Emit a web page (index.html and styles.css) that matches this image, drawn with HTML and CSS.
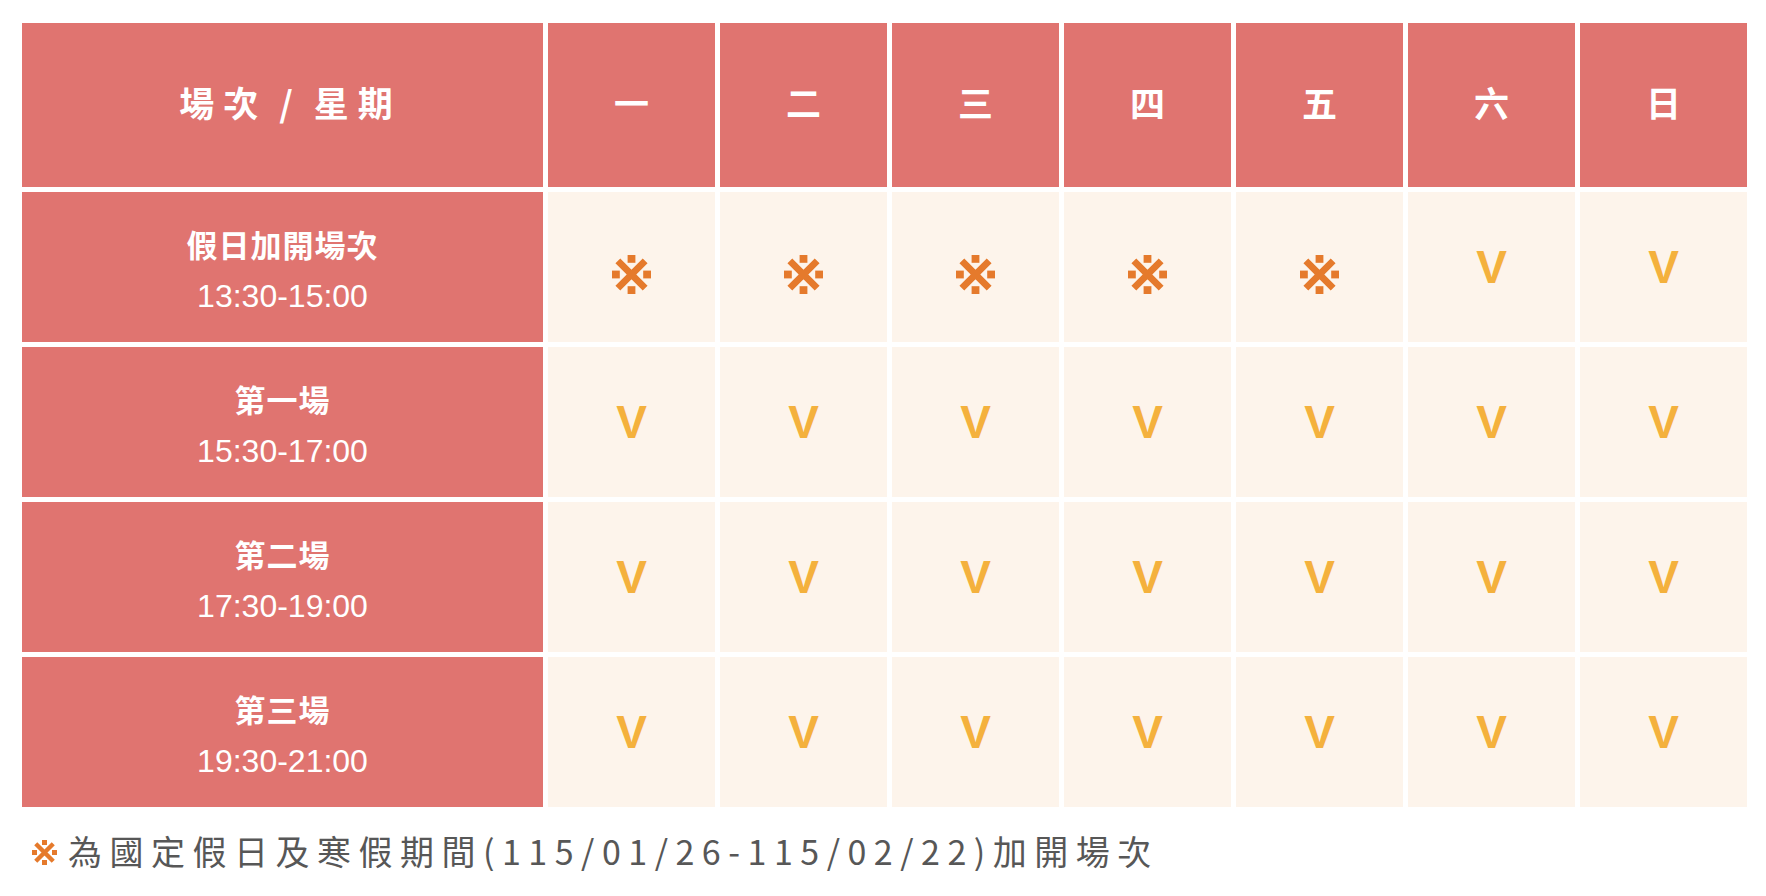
FILE: index.html
```html
<!DOCTYPE html>
<html lang="zh-Hant">
<head>
<meta charset="utf-8">
<title>場次表</title>
<link rel="stylesheet" href="styles.css">
</head>
<body>
<div class="wrap">
  <div class="grid">
    <div class="cell head top corner">場次 / 星期</div>
    <div class="cell head top day">一</div>
    <div class="cell head top day">二</div>
    <div class="cell head top day">三</div>
    <div class="cell head top day">四</div>
    <div class="cell head top day">五</div>
    <div class="cell head top day">六</div>
    <div class="cell head top day">日</div>

    <div class="cell head row"><span class="title">假日加開場次</span><span class="time">13:30-15:00</span></div>
    <div class="cell body"><svg class="mark" viewBox="0 0 40 40" aria-label="※"><rect x="16" y="0" width="8" height="8"/><rect x="16" y="32" width="8" height="8"/><rect x="0" y="16" width="8" height="8"/><rect x="32" y="16" width="8" height="8"/><path d="M6 6 L34 34 M34 6 L6 34"/></svg></div>
    <div class="cell body"><svg class="mark" viewBox="0 0 40 40" aria-label="※"><rect x="16" y="0" width="8" height="8"/><rect x="16" y="32" width="8" height="8"/><rect x="0" y="16" width="8" height="8"/><rect x="32" y="16" width="8" height="8"/><path d="M6 6 L34 34 M34 6 L6 34"/></svg></div>
    <div class="cell body"><svg class="mark" viewBox="0 0 40 40" aria-label="※"><rect x="16" y="0" width="8" height="8"/><rect x="16" y="32" width="8" height="8"/><rect x="0" y="16" width="8" height="8"/><rect x="32" y="16" width="8" height="8"/><path d="M6 6 L34 34 M34 6 L6 34"/></svg></div>
    <div class="cell body"><svg class="mark" viewBox="0 0 40 40" aria-label="※"><rect x="16" y="0" width="8" height="8"/><rect x="16" y="32" width="8" height="8"/><rect x="0" y="16" width="8" height="8"/><rect x="32" y="16" width="8" height="8"/><path d="M6 6 L34 34 M34 6 L6 34"/></svg></div>
    <div class="cell body"><svg class="mark" viewBox="0 0 40 40" aria-label="※"><rect x="16" y="0" width="8" height="8"/><rect x="16" y="32" width="8" height="8"/><rect x="0" y="16" width="8" height="8"/><rect x="32" y="16" width="8" height="8"/><path d="M6 6 L34 34 M34 6 L6 34"/></svg></div>
    <div class="cell body"><span class="v">V</span></div>
    <div class="cell body"><span class="v">V</span></div>

    <div class="cell head row"><span class="title">第一場</span><span class="time">15:30-17:00</span></div>
    <div class="cell body"><span class="v">V</span></div>
    <div class="cell body"><span class="v">V</span></div>
    <div class="cell body"><span class="v">V</span></div>
    <div class="cell body"><span class="v">V</span></div>
    <div class="cell body"><span class="v">V</span></div>
    <div class="cell body"><span class="v">V</span></div>
    <div class="cell body"><span class="v">V</span></div>

    <div class="cell head row"><span class="title">第二場</span><span class="time">17:30-19:00</span></div>
    <div class="cell body"><span class="v">V</span></div>
    <div class="cell body"><span class="v">V</span></div>
    <div class="cell body"><span class="v">V</span></div>
    <div class="cell body"><span class="v">V</span></div>
    <div class="cell body"><span class="v">V</span></div>
    <div class="cell body"><span class="v">V</span></div>
    <div class="cell body"><span class="v">V</span></div>

    <div class="cell head row"><span class="title">第三場</span><span class="time">19:30-21:00</span></div>
    <div class="cell body"><span class="v">V</span></div>
    <div class="cell body"><span class="v">V</span></div>
    <div class="cell body"><span class="v">V</span></div>
    <div class="cell body"><span class="v">V</span></div>
    <div class="cell body"><span class="v">V</span></div>
    <div class="cell body"><span class="v">V</span></div>
    <div class="cell body"><span class="v">V</span></div>
  </div>
  <p class="note"><svg class="note-mark" viewBox="0 0 40 40" aria-label="※"><rect x="16" y="0" width="8" height="8"/><rect x="16" y="32" width="8" height="8"/><rect x="0" y="16" width="8" height="8"/><rect x="32" y="16" width="8" height="8"/><path d="M6 6 L34 34 M34 6 L6 34"/></svg><span class="note-text">為國定假日及寒假期間(115/01/26-115/02/22)加開場次</span></p>
</div>
</body>
</html>
```
FILE: styles.css
```css
html, body {
  margin: 0;
  padding: 0;
  background: #ffffff;
}

body {
  font-family: "Noto Sans CJK TC", "Noto Sans", sans-serif;
}

.wrap {
  padding: 23px 20px 0 22px;
}

.grid {
  display: grid;
  grid-template-columns: 521px repeat(7, 167px);
  grid-template-rows: 164px repeat(4, 150px);
  gap: 5px;
}

.cell {
  display: flex;
  align-items: center;
  justify-content: center;
}

.head {
  background: #e07470;
  color: #ffffff;
}

.top {
  padding-bottom: 8px;
  box-sizing: border-box;
}

.body {
  background: #fdf4eb;
}

.corner,
.day {
  font-size: 35px;
  font-weight: 700;
  letter-spacing: 9px;
  text-indent: 9px;
}

.corner {
  word-spacing: -5px;
  text-indent: 16px;
}

.row {
  flex-direction: column;
  padding-top: 6px;
  box-sizing: border-box;
}

.title {
  font-size: 31px;
  font-weight: 700;
  line-height: 50px;
  letter-spacing: 1px;
}

.time {
  font-family: "Liberation Sans", Arial, sans-serif;
  font-size: 32px;
  line-height: 50px;
  margin-top: 2px;
}

.mark {
  width: 39px;
  height: 39px;
  margin-top: 15px;
  fill: #e57a2c;
  stroke: #e57a2c;
  stroke-width: 7;
}

.mark rect,
.note-mark rect {
  stroke: none;
}

.v {
  color: #f4b13d;
  font-family: "Liberation Sans", Arial, sans-serif;
  font-size: 46px;
  font-weight: 700;
  line-height: 1;
}

.note {
  display: flex;
  align-items: center;
  margin: 24px 0 0 0;
  padding-left: 10px;
  font-size: 34px;
  line-height: 40px;
  letter-spacing: 7.5px;
  color: #575757;
}

.note-mark {
  width: 25px;
  height: 25px;
  margin: 2px 11px 0 0;
  flex: none;
  fill: #e57a2c;
  stroke: #e57a2c;
  stroke-width: 7;
}
```
